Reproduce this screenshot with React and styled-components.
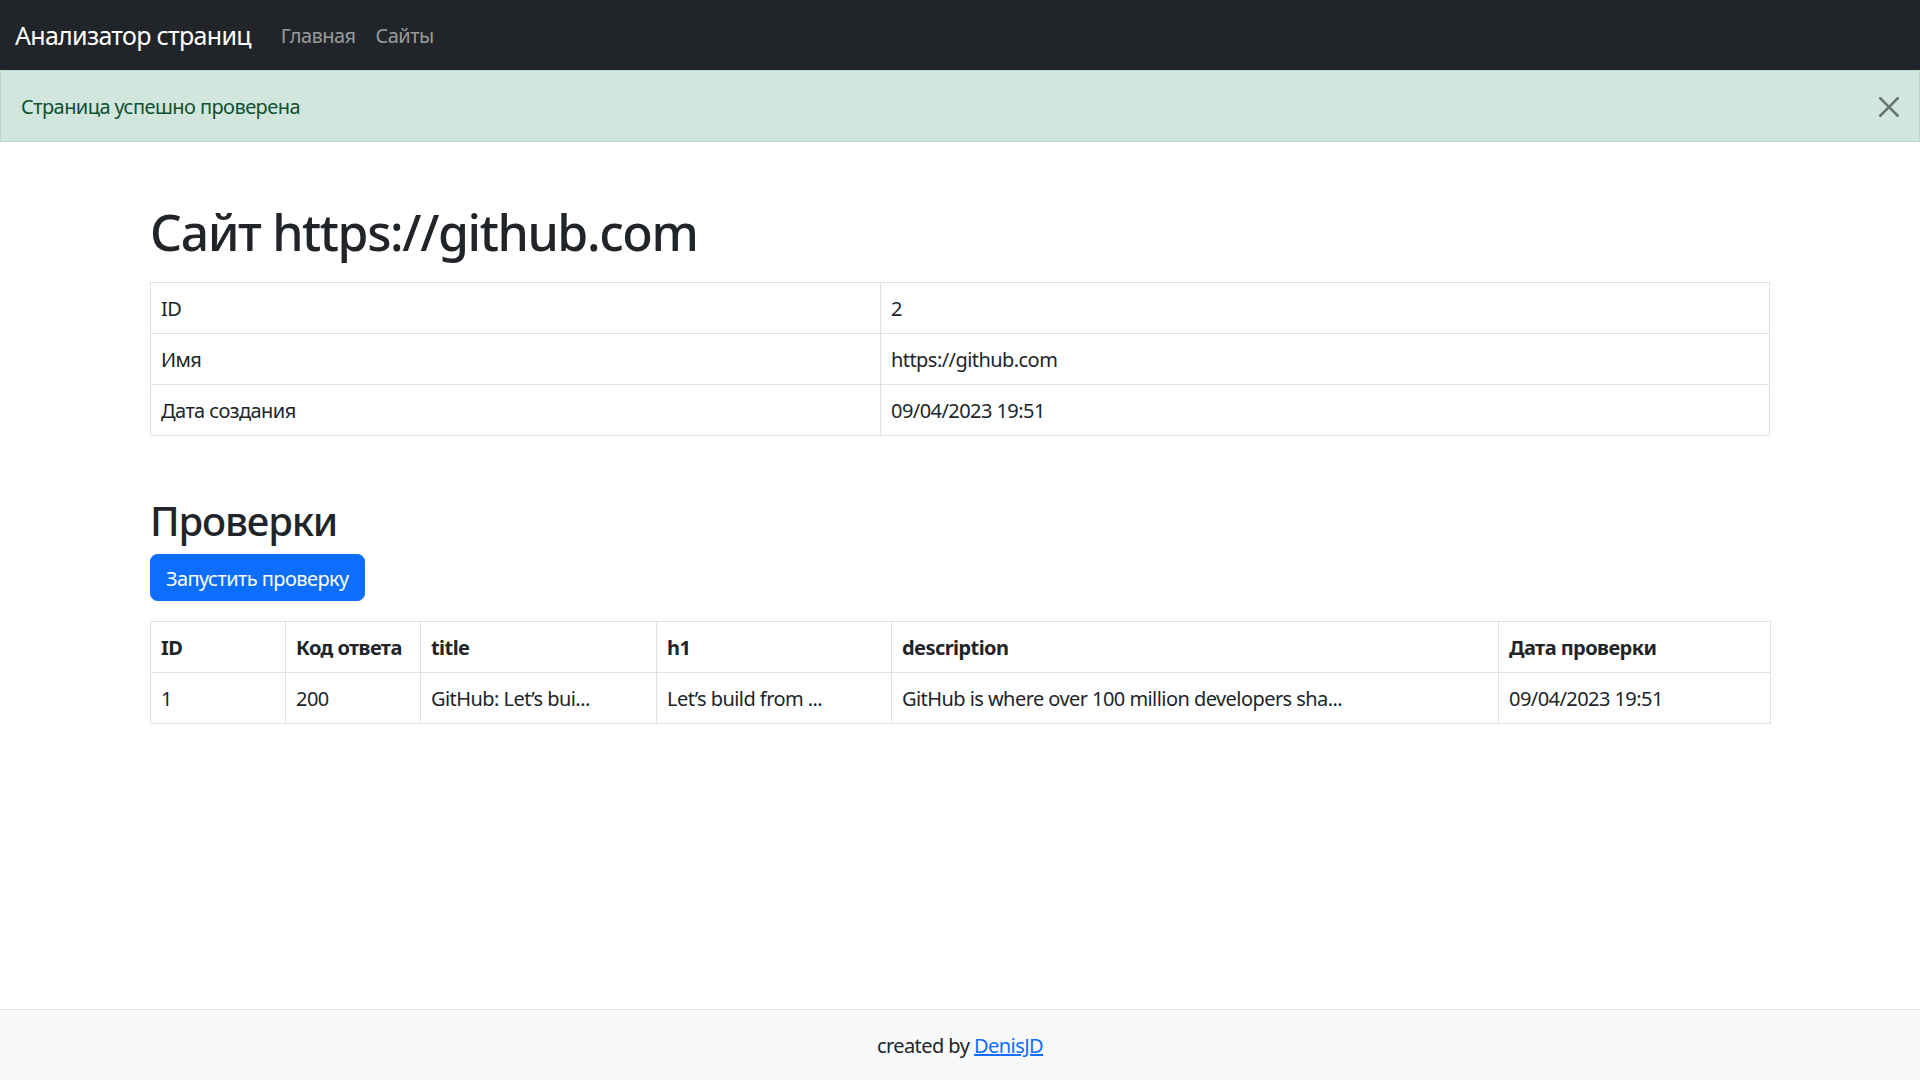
import styled, { createGlobalStyle } from "styled-components";

const GlobalStyle = createGlobalStyle`
  *, *::before, *::after {
    box-sizing: border-box;
  }

  body {
    margin: 0;
    font-family: "Noto Sans", "Open Sans", sans-serif;
    font-size: 20px;
    line-height: 1.5;
    letter-spacing: -0.028em;
    color: #212529;
    background: #fff;
  }
`;

const Page = styled.div`
  min-height: 100vh;
  display: flex;
  flex-direction: column;
`;

const Navbar = styled.nav`
  height: 70px;
  padding: 2px 15px 0;
  display: flex;
  align-items: center;
  background: #212529;
`;

const Brand = styled.a`
  font-size: 25px;
  letter-spacing: -0.028em;
  color: #fff;
  text-decoration: none;
  margin-right: 20px;
`;

const NavLink = styled.a`
  padding: 0 10px;
  color: rgba(255, 255, 255, 0.55);
  text-decoration: none;
`;

const Alert = styled.div`
  display: flex;
  align-items: center;
  justify-content: space-between;
  padding: 21px 20px 19px;
  background: #d1e7dd;
  border: 1px solid #badbcc;
  color: #0f5132;
`;

const CloseButton = styled.button`
  width: 20px;
  height: 20px;
  padding: 0;
  border: 0;
  background: transparent;
  opacity: 0.5;
  display: flex;
  cursor: pointer;
`;

const Main = styled.main`
  flex: 1;
  width: 1620px;
  margin: 0 auto;
`;

const Title = styled.h1`
  margin: 60px 0 20px;
  font-size: 50px;
  font-weight: 500;
  line-height: 1.2;
  letter-spacing: -0.028em;
`;

const Subtitle = styled.h2`
  margin: 61px 0 9px;
  font-size: 40px;
  font-weight: 500;
  line-height: 1.2;
  letter-spacing: -0.028em;
`;

const Button = styled.button`
  font-family: inherit;
  font-size: 20px;
  line-height: 30px;
  letter-spacing: -0.028em;
  padding: 8.5px 15px 6.5px;
  border: 1px solid #0d6efd;
  border-radius: 7.5px;
  background: #0d6efd;
  color: #fff;
  margin-bottom: 20px;
  cursor: pointer;
`;

const Table = styled.table`
  width: 100%;
  border-collapse: collapse;
  table-layout: fixed;
`;

const Cell = styled.td`
  padding: 11px 10px 9px;
  border: 1px solid #dee2e6;
  text-align: left;
  vertical-align: top;
  white-space: nowrap;
  font-weight: ${(p) => (p.$head ? 700 : 400)};
`;

const Footer = styled.footer`
  padding: 21px 0 19px;
  border-top: 1px solid #dee2e6;
  background: #f8f9fa;
  text-align: center;
`;

const Link = styled.a`
  color: #0d6efd;
  text-decoration: underline;
`;

const site = [
  ["ID", "2"],
  ["Имя", "https://github.com"],
  ["Дата создания", "09/04/2023 19:51"],
];

const checkCols = [
  { title: "ID", width: 135 },
  { title: "Код ответа", width: 135 },
  { title: "title", width: 236 },
  { title: "h1", width: 235 },
  { title: "description", width: 607 },
  { title: "Дата проверки", width: 272 },
];

const checks = [
  [
    "1",
    "200",
    "GitHub: Let’s bui...",
    "Let’s build from ...",
    "GitHub is where over 100 million developers sha...",
    "09/04/2023 19:51",
  ],
];

function CloseIcon() {
  return (
    <svg width="20" height="20" viewBox="0 0 16 16" fill="#000">
      <path d="M.293.293a1 1 0 0 1 1.414 0L8 6.586 14.293.293a1 1 0 1 1 1.414 1.414L9.414 8l6.293 6.293a1 1 0 0 1-1.414 1.414L8 9.414l-6.293 6.293a1 1 0 0 1-1.414-1.414L6.586 8 .293 1.707a1 1 0 0 1 0-1.414z" />
    </svg>
  );
}

export default function App() {
  return (
    <>
      <GlobalStyle />
      <Page>
        <Navbar>
          <Brand href="#">Анализатор страниц</Brand>
          <NavLink href="#">Главная</NavLink>
          <NavLink href="#">Сайты</NavLink>
        </Navbar>

        <Alert>
          <span>Страница успешно проверена</span>
          <CloseButton aria-label="Close">
            <CloseIcon />
          </CloseButton>
        </Alert>

        <Main>
          <Title>Сайт https://github.com</Title>
          <Table>
            <colgroup>
              <col style={{ width: 730 }} />
              <col />
            </colgroup>
            <tbody>
              {site.map(([label, value]) => (
                <tr key={label}>
                  <Cell>{label}</Cell>
                  <Cell>{value}</Cell>
                </tr>
              ))}
            </tbody>
          </Table>

          <Subtitle>Проверки</Subtitle>
          <Button>Запустить проверку</Button>

          <Table>
            <colgroup>
              {checkCols.map((c) => (
                <col key={c.title} style={{ width: c.width }} />
              ))}
            </colgroup>
            <thead>
              <tr>
                {checkCols.map((c) => (
                  <Cell as="th" $head key={c.title}>
                    {c.title}
                  </Cell>
                ))}
              </tr>
            </thead>
            <tbody>
              {checks.map((row) => (
                <tr key={row[0]}>
                  {row.map((v, i) => (
                    <Cell key={i}>{v}</Cell>
                  ))}
                </tr>
              ))}
            </tbody>
          </Table>
        </Main>

        <Footer>
          created by <Link href="#">DenisJD</Link>
        </Footer>
      </Page>
    </>
  );
}
